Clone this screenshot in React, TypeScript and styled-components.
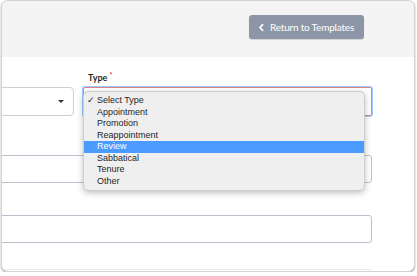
import React from 'react';
import styled, {createGlobalStyle} from "styled-components";

const GlobalStyle = createGlobalStyle`
  html, body {
    margin: 0;
    padding: 0;
    background: #ffffff;
  }
  body {
    font-family: Lato, "Open Sans", sans-serif;
  }
`

const types = ['Select Type', 'Appointment', 'Promotion', 'Reappointment', 'Review', 'Sabbatical', 'Tenure', 'Other'];

export default function App() {
    return (
        <>
            <GlobalStyle/>
            <Card>
                <Header>
                    <ReturnButton>
                        <Chevron viewBox="0 0 8 10">
                            <path d="M5.8 1.2 L2.3 5 L5.8 8.8" fill="none" stroke="#fff" strokeWidth="1.9"/>
                        </Chevron>
                        Return to Templates
                    </ReturnButton>
                </Header>
                <Body>
                    <Form>
                        <Label>Type<Required>*</Required></Label>
                        <SelectBox>
                            <Caret/>
                        </SelectBox>
                        <TypeCell>
                            <TypeSelect/>
                            <Menu>
                                {types.map((t, i) => (
                                    <MenuItem key={t} $active={t === 'Review'}>
                                        {i === 0 && <Check>✓</Check>}
                                        {t}
                                    </MenuItem>
                                ))}
                            </Menu>
                        </TypeCell>
                        <WideInput $top={39}/>
                        <WideInput $top={32}/>
                        <WideInput $top={26} $faint/>
                    </Form>
                </Body>
            </Card>
        </>
    );
}

const Card = styled.div`
  width: 414px;
  height: 272px;
  margin-left: 1px;
  box-sizing: border-box;
  border: 1px solid #d3d3d3;
  border-radius: 7px;
  overflow: hidden;
  background: #fff;
  box-shadow: 0 1px 2px rgba(0, 0, 0, 0.35);
`

const Header = styled.div`
  height: 56px;
  background: #f4f4f4;
  display: flex;
  justify-content: flex-end;
  align-items: flex-start;
  padding: 14px 50px 0 0;
  box-sizing: border-box;
`

const ReturnButton = styled.button`
  width: 115px;
  height: 24px;
  border: none;
  border-radius: 3px;
  background: #8d96a7;
  color: #fff;
  font-family: Lato, sans-serif;
  font-size: 10px;
  letter-spacing: -0.2px;
  white-space: nowrap;
  display: flex;
  align-items: center;
  gap: 5px;
  padding: 0 0 0 9px;
  box-shadow: 0 1px 1px rgba(0, 0, 0, 0.15);
`

const Chevron = styled.svg`
  width: 7px;
  height: 9px;
  flex: none;
`

const Body = styled.div`
  padding-top: 13px;
`

const Form = styled.div`
  display: grid;
  grid-template-columns: 202px 289px;
  column-gap: 9px;
  margin-left: -130px;
`

const Label = styled.div`
  grid-column: 2;
  font-size: 9px;
  font-weight: 700;
  color: #2b2b2b;
  line-height: 11px;
  padding-left: 5px;
  margin-bottom: 4px;
`

const Required = styled.span`
  color: #e0474c;
  font-size: 8px;
  vertical-align: 3px;
  margin-left: 2px;
`

const SelectBox = styled.div`
  grid-column: 1;
  height: 29px;
  box-sizing: border-box;
  border: 1px solid #cfcfcf;
  border-radius: 4px;
  display: flex;
  align-items: center;
  justify-content: flex-end;
  padding-right: 9px;
`

const Caret = styled.span`
  width: 0;
  height: 0;
  border-left: 3px solid transparent;
  border-right: 3px solid transparent;
  border-top: 3px solid #333;
`

const TypeCell = styled.div`
  grid-column: 2;
  position: relative;
`

const TypeSelect = styled.div`
  height: 29px;
  box-sizing: border-box;
  border: 1px solid #d9868e;
  border-radius: 2px;
  box-shadow: 0 0 0 1px #9ccaff;
`

const Menu = styled.div`
  position: absolute;
  top: 4px;
  left: 0;
  width: 282px;
  box-sizing: border-box;
  padding: 3px 0 3px;
  background: #efefef;
  border: 1px solid #cdcdcd;
  border-radius: 5px;
  box-shadow: 0 2px 6px rgba(0, 0, 0, 0.25);
  font-family: "Liberation Sans", Arial, sans-serif;
  font-size: 9px;
  z-index: 2;
`

const MenuItem = styled.div<{ $active?: boolean }>`
  position: relative;
  height: 11.5px;
  line-height: 11.5px;
  padding-left: 13px;
  color: ${p => p.$active ? '#ffffff' : '#262626'};
  background: ${p => p.$active ? '#4a9bfd' : 'transparent'};
`

const Check = styled.span`
  position: absolute;
  left: 3px;
  top: 0;
`

const WideInput = styled.div<{ $top: number; $faint?: boolean }>`
  grid-column: 1 / span 2;
  margin-top: ${p => p.$top}px;
  height: 28px;
  box-sizing: border-box;
  border: 1px solid ${p => p.$faint ? '#e6e8ec' : '#bac1cd'};
  border-radius: 3px;
`
